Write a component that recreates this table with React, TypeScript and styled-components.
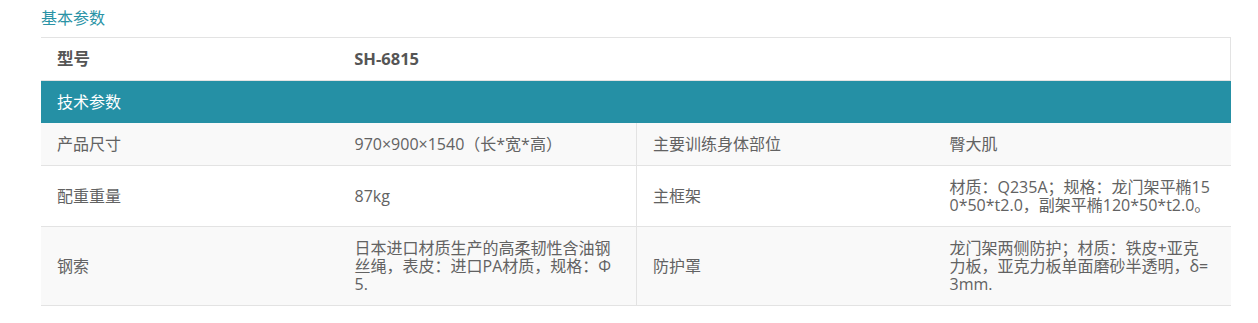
import styled, { createGlobalStyle } from 'styled-components';

type Pair = { label: string; value: string };

const rows: Pair[][] = [
  [
    { label: '产品尺寸', value: '970×900×1540（长*宽*高）' },
    { label: '主要训练身体部位', value: '臀大肌' },
  ],
  [
    { label: '配重重量', value: '87kg' },
    { label: '主框架', value: '材质：Q235A；规格：龙门架平椭150*50*t2.0，副架平椭120*50*t2.0。' },
  ],
  [
    { label: '钢索', value: '日本进口材质生产的高柔韧性含油钢丝绳，表皮：进口PA材质，规格：Φ5.' },
    { label: '防护罩', value: '龙门架两侧防护；材质：铁皮+亚克力板，亚克力板单面磨砂半透明，δ=3mm.' },
  ],
];

export default function App() {
  return (<Page>
    <GlobalStyle />
    <Title>基本参数</Title>
    <Table>
      <ModelRow>
        <Cell $bold>型号</Cell>
        <Cell $bold $span={3}>SH-6815</Cell>
      </ModelRow>
      <Header>技术参数</Header>
      {rows.map((row, i) => (
        <Row key={i} $striped={i % 2 === 0}>
          {row.map((pair, j) => (<>
            <Cell key={`l${j}`} $divider={j === 1}>{pair.label}</Cell>
            <Cell key={`v${j}`}>{pair.value}</Cell>
          </>))}
        </Row>
      ))}
    </Table>
  </Page>)
}

const GlobalStyle = createGlobalStyle`
  body {
    margin: 0;
    background: #fff;
    font-family: "Open Sans", "Noto Sans CJK SC", sans-serif;
  }
`

const Page = styled.div`
  padding: 0 27px 0 41px;
  width: 1190px;
`

const Title = styled.div`
  height: 37px;
  line-height: 37px;
  font-size: 16px;
  color: #2a93a6;
`

const Table = styled.div`
  display: flex;
  flex-direction: column;
`

const Row = styled.div<{ $striped?: boolean }>`
  display: grid;
  grid-template-columns: repeat(4, 1fr);
  background: ${p => p.$striped ? '#f9f9f9' : '#fff'};
  border-bottom: 1px solid #e3e3e3;
`

const ModelRow = styled(Row)`
  border-top: 1px solid #e3e3e3;
  border-right: 1px solid #e3e3e3;
`

const Header = styled.div`
  height: 42px;
  line-height: 42px;
  padding: 0 16px;
  background: #2590a5;
  color: #fff;
  font-size: 16px;
`

const Cell = styled.div<{ $bold?: boolean; $divider?: boolean; $span?: number }>`
  display: flex;
  align-items: center;
  grid-column: span ${p => p.$span ?? 1};
  padding: 12px 20px 12px 16px;
  font-size: ${p => p.$bold ? '16.5px' : '16px'};
  line-height: 18px;
  color: ${p => p.$bold ? '#555' : '#626262'};
  font-weight: ${p => p.$bold ? 700 : 400};
  word-break: break-all;
  border-left: ${p => p.$divider ? '1px solid #e3e3e3' : 'none'};
`
